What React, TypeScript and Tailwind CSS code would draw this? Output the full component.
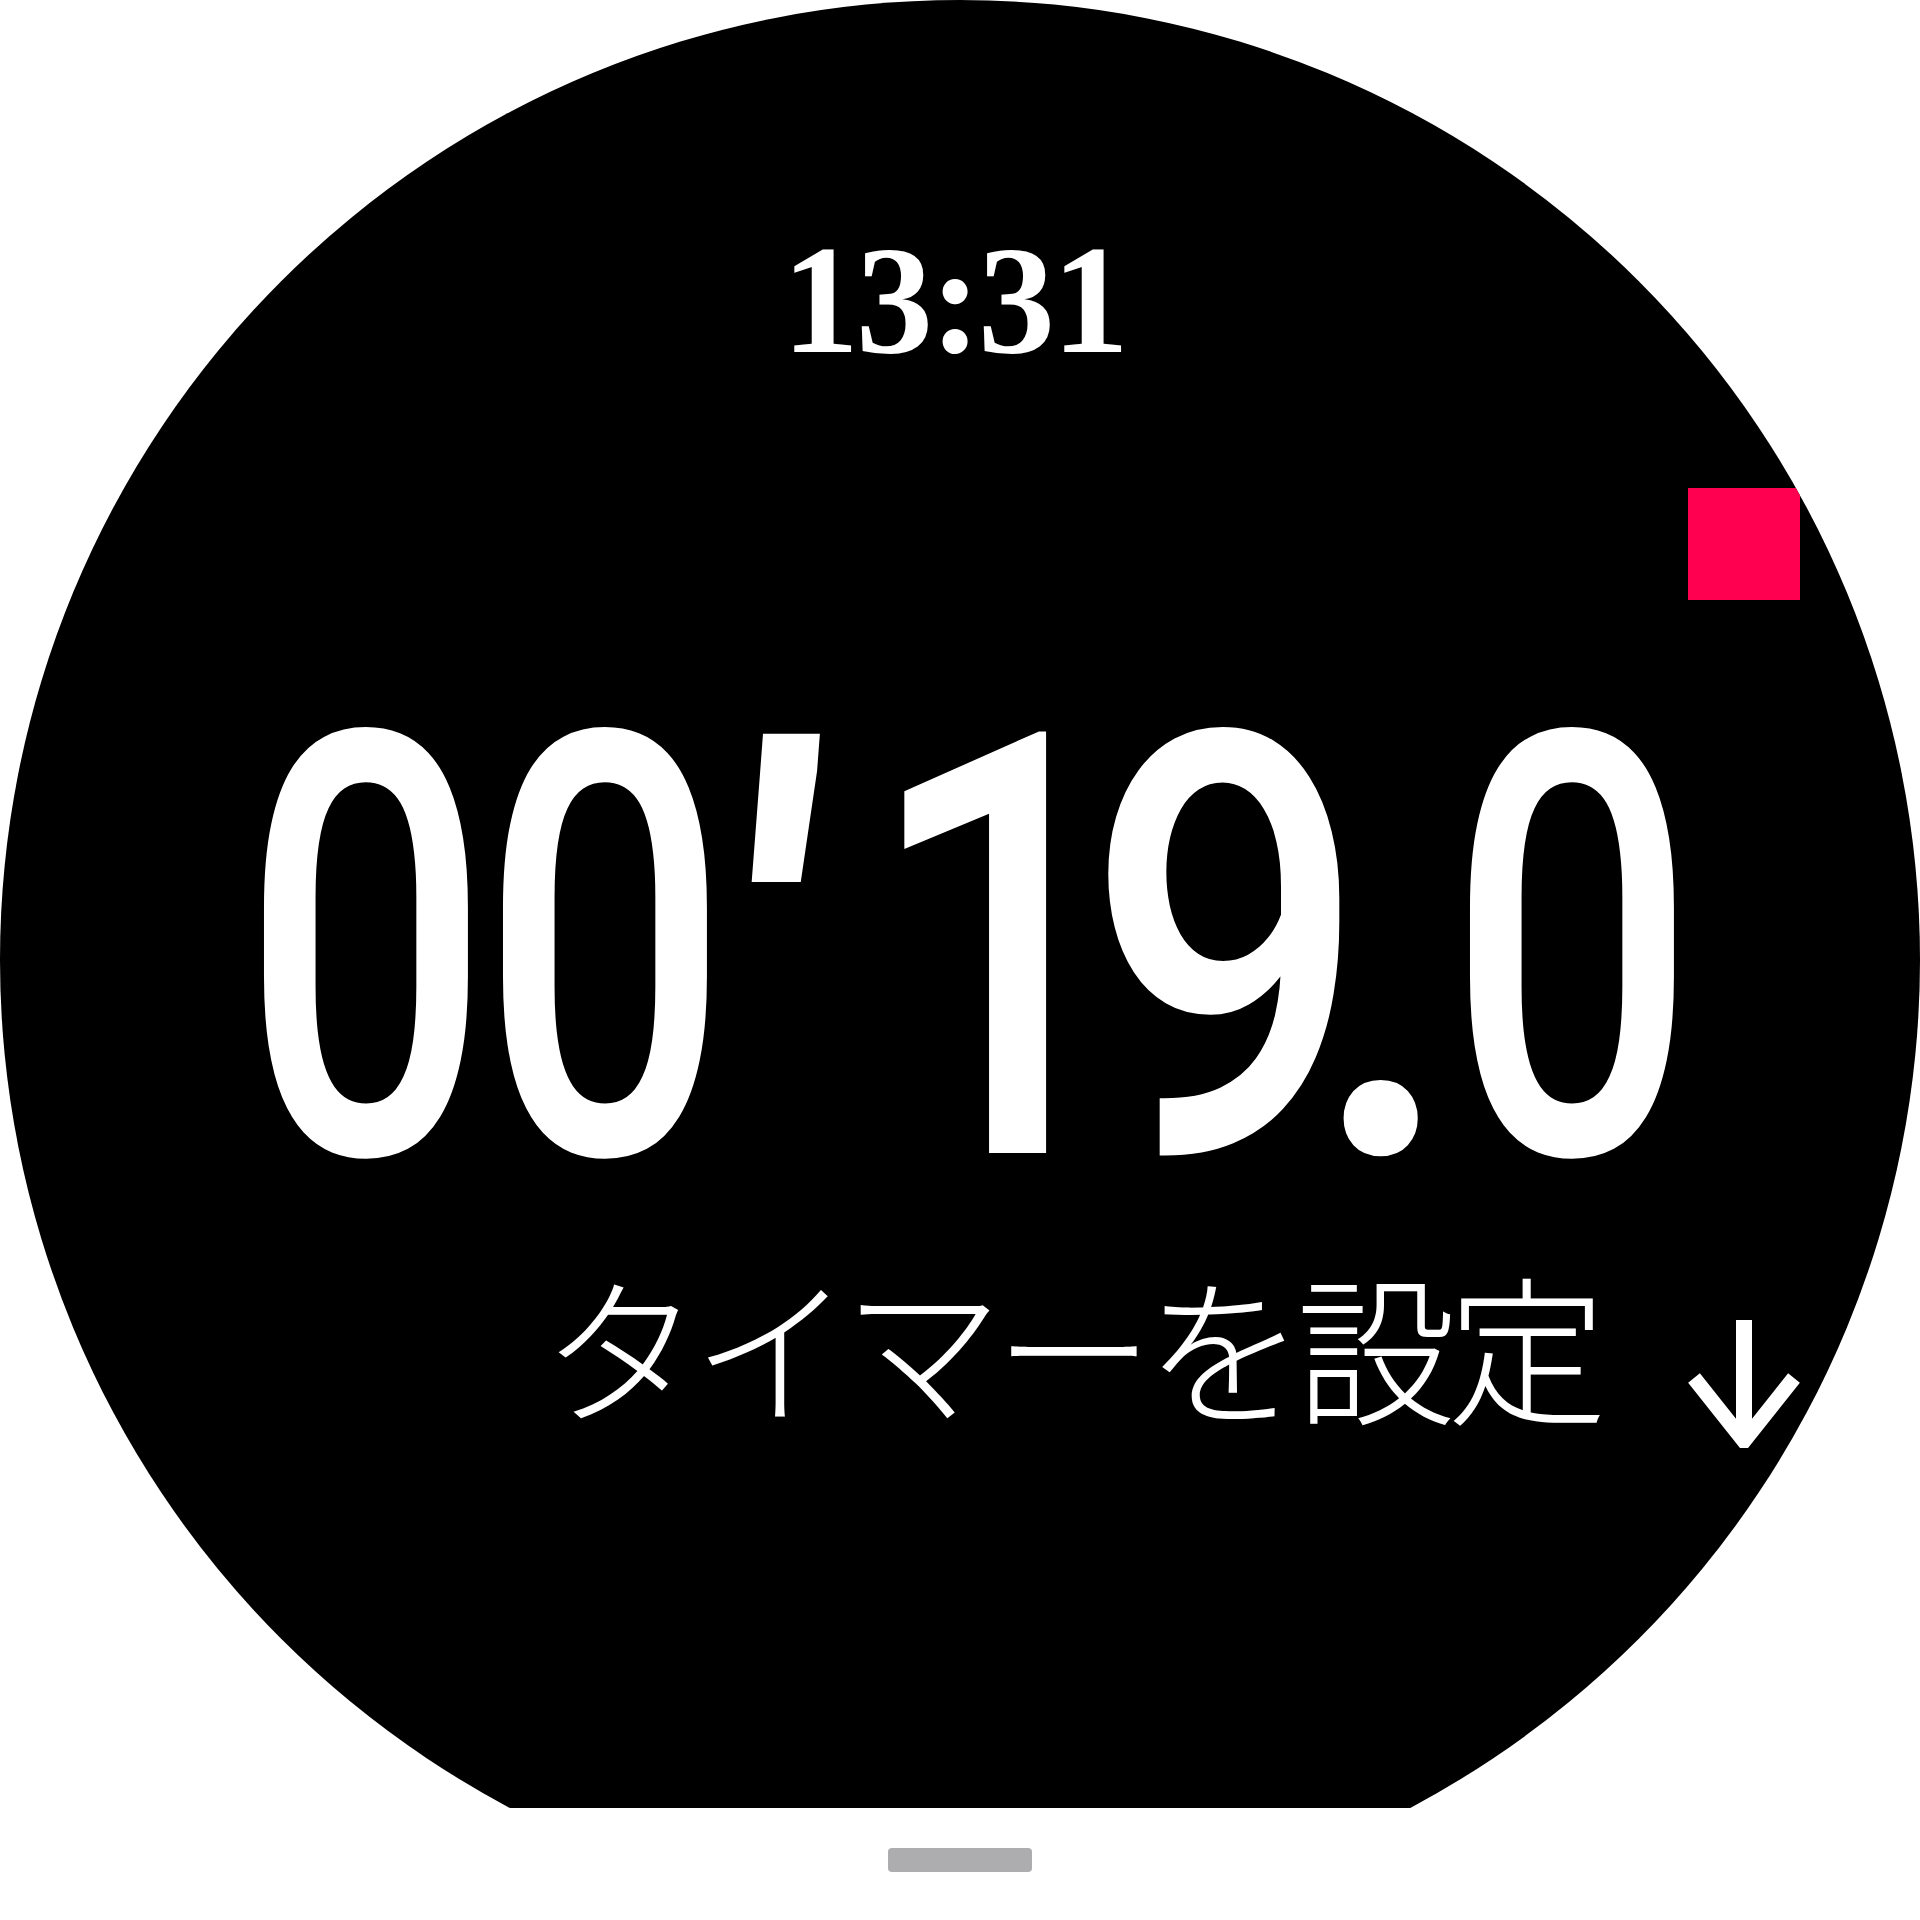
function ArrowDown() {
  return (
    <svg width="112" height="128" viewBox="0 0 112 128" fill="none" stroke="white" strokeWidth="15">
      <path d="M56 0 V122" strokeWidth="16" />
      <path d="M6 58 L56 121 L106 58" strokeLinejoin="miter" />
    </svg>
  )
}

// each glyph of the stopwatch gets its own box: [char, box width, horizontal scale / nudges]
const glyphs: [string, string, string][] = [
  ['0', 'w-[239px]', 'scale-x-[0.74]'],
  ['0', 'w-[240px]', 'scale-x-[0.74]'],
  ['′', 'w-[94px]', 'scale-x-[1.08] -skew-x-[4deg] translate-y-[24px]'],
  ['1', 'w-[366px]', 'scale-x-[0.82]'],
  ['9', 'w-[84px]', 'scale-x-[0.84]'],
  ['.', 'w-[228px]', 'scale-x-[0.91]'],
  ['0', 'w-[150px]', 'scale-x-[0.74]'],
]

export default function App() {
  return (
    <div className="w-[1920px] h-[1920px] bg-white overflow-hidden">
      <div className="h-[1808px] overflow-hidden">
        <div className="relative w-[1920px] h-[1920px] rounded-full bg-black flex flex-col items-center overflow-hidden">
          <div className="mt-[223px] mr-[12px] text-white text-[154px] leading-none font-bold tracking-[-0.02em] font-['Liberation_Serif','DejaVu_Serif',serif]">
            13:31
          </div>

          <div className="absolute left-[1688px] top-[488px] w-[112px] h-[112px] bg-[#ff0050]" />

          <div className="mt-[279px] w-full flex pl-[246px] text-white text-[591px] leading-none font-medium whitespace-nowrap font-['Roboto',sans-serif]">
            {glyphs.map(([ch, w, t], i) => (
              <span key={i} className={`${w} flex justify-center shrink-0`}>
                <span className={t}>{ch}</span>
              </span>
            ))}
          </div>

          <div className="mt-[16px] w-full flex justify-end items-start pr-[120px]">
            <span className="text-white text-[160px] leading-none font-light tracking-[-9px] font-['Noto_Sans_CJK_JP',sans-serif]">
              タイマーを設定
            </span>
            <div className="ml-[90px] mt-[57px]">
              <ArrowDown />
            </div>
          </div>
        </div>
      </div>
      <div className="mx-auto mt-[40px] w-[144px] h-[24px] rounded-[4px] bg-[#adacae]" />
    </div>
  )
}
